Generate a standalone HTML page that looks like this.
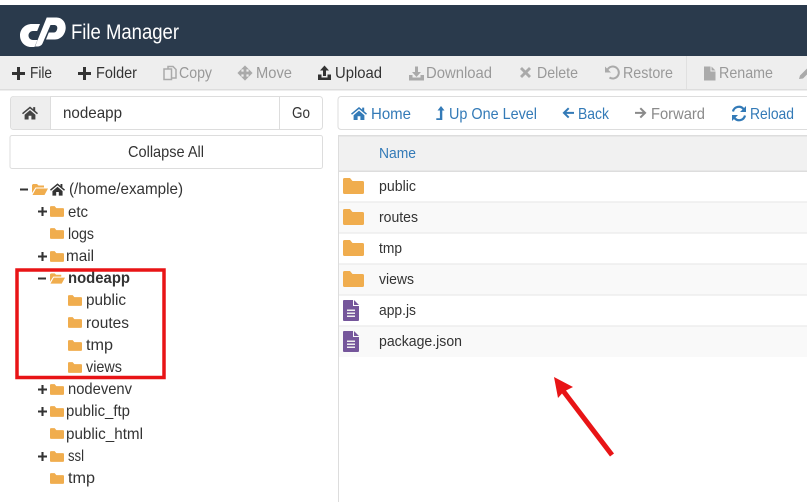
<!DOCTYPE html>
<html><head><meta charset="utf-8"><style>
html,body{margin:0;padding:0;background:#fff;width:807px;height:502px;overflow:hidden}
svg{display:block;filter:blur(.3px)}
text{font-family:"Liberation Sans",sans-serif;font-size:16px;fill:#333}
.d{fill:#999}.l{fill:#337ab7}.t{font-size:14.5px}
</style></head><body>
<svg width="807" height="502" viewBox="0 0 807 502" xmlns="http://www.w3.org/2000/svg">
<defs>
<symbol id="plus" viewBox="0 0 13 13" overflow="visible"><path d="M0 5h5V0h3v5h5v3H8v5H5V8H0z"/></symbol>
<symbol id="home" viewBox="0 0 16 13" overflow="visible"><path d="M8 0L0 6.600l1 1.200L8 2l7 5.800 1-1.200-2.800-2.300V.6h-2v2zM2.600 8.200V13h4V9.200h2.800V13h4V8.200L8 3.600z"/></symbol>
<symbol id="folder" viewBox="0 0 21 16" overflow="visible"><path d="M1.500 0H7l2.500 3H19.500a1.500 1.500 0 0 1 1.500 1.500V14.500a1.500 1.500 0 0 1-1.500 1.500H1.500A1.500 1.500 0 0 1 0 14.500V1.500A1.500 1.500 0 0 1 1.500 0z" fill="#f0ad4e"/></symbol>
<symbol id="open" viewBox="0 0 16 11" overflow="visible"><path d="M1 0h4l1.500 1.500H12V3.500H3.500L0 9V1z M4 4.500H16L12.500 11H0.500z" fill="#f0ad4e"/></symbol>
<symbol id="file" viewBox="0 0 16 21" overflow="visible"><path d="M1 0H10V6H16V20a1 1 0 0 1-1 1H1a1 1 0 0 1-1-1V1a1 1 0 0 1 1-1zM11 0l5 5H11z" fill="#75569b"/><path d="M4 9.500H12V11H4zM4 12.500H12V14H4zM4 15.500H12V17H4z" fill="#eee"/></symbol>
</defs>

<!-- Header -->
<rect x="0" y="5" width="807" height="51" fill="#2a3a4c"/>
<g fill="#fff">
<path d="M40 24H32C25 24 20 29 20 35.500C20 42 25 47 31 47H34.500L37.500 40H33C30.500 40 28.500 38 28.500 35.500C28.500 33 30.500 31 33 31H37.200z"/>
<path d="M35 46.500L46.700 17.500H56.500C62 17.500 65.700 22 65.700 27.500C65.700 34 61 39.500 55 39.500H46L48.800 32.500H54C56 32.500 57.300 30 57.300 28C57.300 26 56 25 54 25H50.500L42.500 43.500C41.500 45.500 39.500 46.500 37 46.500z"/>
</g>
<text x="71" y="39" textLength="108" lengthAdjust="spacingAndGlyphs" style="font-size:21px;fill:#fff">File Manager</text>

<!-- Toolbar -->
<rect x="0" y="56" width="807" height="33" fill="#eee"/>
<rect x="0" y="89" width="807" height="1.500" fill="#ddd"/>
<rect x="686" y="56" width="1" height="33" fill="#e0e0e0"/>
<use href="#plus" x="12" y="67" width="13" height="13" fill="#333"/>
<text x="30" y="78" textLength="22" lengthAdjust="spacingAndGlyphs">File</text>
<use href="#plus" x="78" y="67" width="13" height="13" fill="#333"/>
<text x="96" y="78" textLength="41" lengthAdjust="spacingAndGlyphs">Folder</text>
<g fill="none" stroke="#aaa" stroke-width="1.500"><rect x="164" y="69" width="7.500" height="10.500"/><path d="M168 69v-2.500h5l3 3v8.500h-4.500"/></g>
<text class="d" x="179" y="78" textLength="33" lengthAdjust="spacingAndGlyphs">Copy</text>
<path d="M245 66l3 3h-2v3h3v-2l3 3-3 3v-2h-3v3h2l-3 3-3-3h2v-3h-3v2l-3-3 3-3v2h3v-3h-2z" fill="#aaa" stroke="#aaa" stroke-width=".8"/>
<text class="d" x="256" y="78" textLength="36" lengthAdjust="spacingAndGlyphs">Move</text>
<path d="M324.500 65.500l4.500 5h-3v5.500h-3v-5.500h-3zM318 74.500h3.500v3h6v-3h3.500v5.500h-13z" fill="#333"/>
<text x="335" y="78" textLength="47" lengthAdjust="spacingAndGlyphs">Upload</text>
<path d="M415 66.500h3v5.500h3l-4.500 5-4.500-5h3zM409 75h3.500v2.500h8V75h3.500v5.500H409z" fill="#aaa"/>
<text class="d" x="426" y="78" textLength="66" lengthAdjust="spacingAndGlyphs">Download</text>
<path d="M522 67l3.500 3.500L529 67l2 2-3.500 3.500L531 76l-2 2-3.500-3.500L522 78l-2-2 3.500-3.500L520 69z" fill="#aaa"/>
<text class="d" x="537" y="78" textLength="41" lengthAdjust="spacingAndGlyphs">Delete</text>
<path d="M607 71a6 6 0 1 1 2.500 6.500" fill="none" stroke="#aaa" stroke-width="2"/><path d="M605 66.500v6h6z" fill="#aaa"/>
<text class="d" x="623" y="78" textLength="50" lengthAdjust="spacingAndGlyphs">Restore</text>
<path d="M704 66.500h6.500v5h5V80.500H704zM711.500 66.500l4 4h-4z" fill="#aaa"/>
<text class="d" x="719" y="78" textLength="54" lengthAdjust="spacingAndGlyphs">Rename</text>
<path d="M799 79l1-3.500 7-7 3 3-7 7z" fill="#aaa"/>

<!-- Search box -->
<rect x="10.500" y="96.500" width="312" height="33" rx="3" fill="#fff" stroke="#ddd"/>
<path d="M11 99.500a3 3 0 0 1 3-3H50.500V129H14a3 3 0 0 1-3-3z" fill="#eee"/>
<rect x="50" y="96.500" width="1" height="33" fill="#ddd"/>
<rect x="279" y="96.500" width="1" height="33" fill="#ddd"/>
<use href="#home" x="22" y="106.500" width="16" height="13" fill="#444"/>
<text x="63" y="118" textLength="59" lengthAdjust="spacingAndGlyphs">nodeapp</text>
<text x="292" y="118" textLength="18" lengthAdjust="spacingAndGlyphs">Go</text>

<!-- Collapse all -->
<rect x="10" y="135.500" width="312.500" height="33" rx="2" fill="#fff" stroke="#ddd"/>
<text x="128" y="157" textLength="76" lengthAdjust="spacingAndGlyphs">Collapse All</text>

<!-- Tree -->
<rect x="20" y="188.500" width="8" height="2" fill="#333"/>
<use href="#open" x="32" y="184" width="16" height="11"/>
<use href="#home" x="50" y="183" width="15" height="13" fill="#333"/>
<text x="69" y="194" textLength="114" lengthAdjust="spacingAndGlyphs">(/home/example)</text>

<use href="#plus" x="38" y="207" width="9" height="9" fill="#333"/><use href="#folder" x="50" y="206" width="14" height="11"/>
<text x="68" y="217" textLength="20" lengthAdjust="spacingAndGlyphs">etc</text>
<use href="#folder" x="50" y="228" width="14" height="11"/>
<text x="68" y="239" textLength="26" lengthAdjust="spacingAndGlyphs">logs</text>
<use href="#plus" x="38" y="252" width="9" height="9" fill="#333"/><use href="#folder" x="50" y="251" width="14" height="11"/>
<text x="66" y="261" textLength="28" lengthAdjust="spacingAndGlyphs">mail</text>
<rect x="38" y="277.500" width="8" height="2" fill="#333"/>
<use href="#open" x="50" y="273" width="15" height="11"/>
<text x="68" y="283" textLength="62" lengthAdjust="spacingAndGlyphs" font-weight="bold">nodeapp</text>
<use href="#folder" x="68" y="295" width="14" height="11"/>
<text x="86" y="305" textLength="40" lengthAdjust="spacingAndGlyphs">public</text>
<use href="#folder" x="68" y="317" width="14" height="11"/>
<text x="86" y="328" textLength="43" lengthAdjust="spacingAndGlyphs">routes</text>
<use href="#folder" x="68" y="340" width="14" height="11"/>
<text x="86" y="350" textLength="27" lengthAdjust="spacingAndGlyphs">tmp</text>
<use href="#folder" x="68" y="362" width="14" height="11"/>
<text x="86" y="372" textLength="36" lengthAdjust="spacingAndGlyphs">views</text>
<use href="#plus" x="38" y="385" width="9" height="9" fill="#333"/><use href="#folder" x="50" y="384" width="14" height="11"/>
<text x="68" y="394" textLength="64" lengthAdjust="spacingAndGlyphs">nodevenv</text>
<use href="#plus" x="38" y="407" width="9" height="9" fill="#333"/><use href="#folder" x="50" y="406" width="14" height="11"/>
<text x="66" y="416" textLength="64" lengthAdjust="spacingAndGlyphs">public_ftp</text>
<use href="#folder" x="50" y="428" width="14" height="11"/>
<text x="66" y="439" textLength="77" lengthAdjust="spacingAndGlyphs">public_html</text>
<use href="#plus" x="38" y="452" width="9" height="9" fill="#333"/><use href="#folder" x="50" y="451" width="14" height="11"/>
<text x="68" y="461" textLength="16" lengthAdjust="spacingAndGlyphs">ssl</text>
<use href="#folder" x="50" y="473" width="14" height="11"/>
<text x="68" y="483" textLength="27" lengthAdjust="spacingAndGlyphs">tmp</text>

<rect x="17" y="270" width="147" height="107.500" fill="none" stroke="#e81416" stroke-width="3.500"/>

<!-- Nav -->
<path d="M807 96.500H341a3 3 0 0 0-3 3v27a3 3 0 0 0 3 3H807" fill="#fff" stroke="#ddd"/>
<use href="#home" x="351" y="107" width="16" height="13" fill="#337ab7"/>
<text class="l" x="371" y="119" textLength="40" lengthAdjust="spacingAndGlyphs">Home</text>
<path d="M441 106l3.500 4.500h-2.200V120h-6v-1.800h3.600v-7.700h-2.400z" fill="#337ab7"/>
<text class="l" x="449" y="119" textLength="88" lengthAdjust="spacingAndGlyphs">Up One Level</text>
<path d="M568 107.500l1.400 1.400-3 3H574v2h-7.600l3 3-1.400 1.400-5.500-5.400z" fill="#337ab7"/>
<text class="l" x="578" y="119" textLength="31" lengthAdjust="spacingAndGlyphs">Back</text>
<path d="M641 107.500l-1.400 1.400 3 3H635v2h7.600l-3 3 1.400 1.400 5.500-5.400z" fill="#8a8a8a"/>
<text x="651" y="119" textLength="54" lengthAdjust="spacingAndGlyphs" style="fill:#8a8a8a">Forward</text>
<g fill="none" stroke="#337ab7" stroke-width="2.200"><path d="M733 111.500a6 6 0 0 1 10.500-2.500l1.500 1.500"/><path d="M745 115.500a6 6 0 0 1-10.500 2.500l-1.500-1.500"/></g>
<path d="M746 106v6h-6zM732 121v-6h6z" fill="#337ab7"/>
<text class="l" x="750" y="119" textLength="44" lengthAdjust="spacingAndGlyphs">Reload</text>

<!-- Table -->
<rect x="338" y="135" width="469" height="367" fill="#fff"/>
<rect x="338" y="135" width="1" height="367" fill="#ddd"/>
<rect x="339" y="136" width="468" height="35" fill="#f1f1f1"/>
<rect x="339" y="135" width="468" height="1.500" fill="#ddd"/>
<rect x="339" y="170.500" width="468" height="1.500" fill="#ddd"/>
<rect x="339" y="202" width="468" height="31" fill="#f9f9f9"/>
<rect x="339" y="264" width="468" height="31" fill="#f9f9f9"/>
<rect x="339" y="326" width="468" height="31" fill="#f9f9f9"/>
<g fill="#e6e6e6"><rect x="339" y="201.500" width="468" height="1"/><rect x="339" y="232.500" width="468" height="1"/><rect x="339" y="263.500" width="468" height="1"/><rect x="339" y="294.500" width="468" height="1"/><rect x="339" y="325.500" width="468" height="1"/></g>
<text class="t l" x="379" y="158" textLength="37" lengthAdjust="spacingAndGlyphs">Name</text>
<use href="#folder" x="343" y="178" width="21" height="16"/>
<text class="t" x="379" y="191" textLength="37" lengthAdjust="spacingAndGlyphs">public</text>
<use href="#folder" x="343" y="209" width="21" height="16"/>
<text class="t" x="379" y="222" textLength="39" lengthAdjust="spacingAndGlyphs">routes</text>
<use href="#folder" x="343" y="240" width="21" height="16"/>
<text class="t" x="379" y="253" textLength="23" lengthAdjust="spacingAndGlyphs">tmp</text>
<use href="#folder" x="343" y="271" width="21" height="16"/>
<text class="t" x="379" y="284" textLength="35" lengthAdjust="spacingAndGlyphs">views</text>
<use href="#file" x="343" y="300" width="16" height="21"/>
<text class="t" x="379" y="315" textLength="37" lengthAdjust="spacingAndGlyphs">app.js</text>
<use href="#file" x="343" y="331" width="16" height="21"/>
<text class="t" x="379" y="346" textLength="83" lengthAdjust="spacingAndGlyphs">package.json</text>

<!-- Arrow -->
<path d="M554 377L573 387 566 390.500 614 453.500 610 456.500 562 393.500 558 398z" fill="#e81416"/>
</svg>
</body></html>
